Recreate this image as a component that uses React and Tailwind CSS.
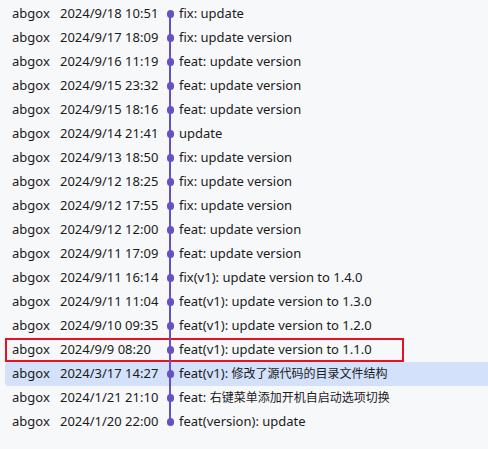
const COMMITS = [
  ['2024/9/18 10:51', 'fix: update'],
  ['2024/9/17 18:09', 'fix: update version'],
  ['2024/9/16 11:19', 'feat: update version'],
  ['2024/9/15 23:32', 'feat: update version'],
  ['2024/9/15 18:16', 'feat: update version'],
  ['2024/9/14 21:41', 'update'],
  ['2024/9/13 18:50', 'fix: update version'],
  ['2024/9/12 18:25', 'fix: update version'],
  ['2024/9/12 17:55', 'fix: update version'],
  ['2024/9/12 12:00', 'feat: update version'],
  ['2024/9/11 17:09', 'feat: update version'],
  ['2024/9/11 16:14', 'fix(v1): update version to 1.4.0'],
  ['2024/9/11 11:04', 'feat(v1): update version to 1.3.0'],
  ['2024/9/10 09:35', 'feat(v1): update version to 1.2.0'],
  ['2024/9/9 08:20', 'feat(v1): update version to 1.1.0'],
  ['2024/3/17 14:27', 'feat(v1): 修改了源代码的目录文件结构'],
  ['2024/1/21 21:10', 'feat: 右键菜单添加开机自启动选项切换'],
  ['2024/1/20 22:00', 'feat(version): update'],
]

const MARKED = 14
const SELECTED = 15

// CJK runs render a touch smaller than the latin text
const Message = ({ text }) =>
  text.split(/([\u4e00-\u9fff]+)/).map((part, i) =>
    /[\u4e00-\u9fff]/.test(part) ? (
      <span key={i} className="text-[12px]">{part}</span>
    ) : (
      <span key={i}>{part}</span>
    )
  )

export default function App() {
  return (
    <div
      className="w-[488px] h-[449px] bg-[#f7f8fa] pt-[2px] text-[13px] text-[#1b1b1b] overflow-hidden"
      style={{ fontFamily: '"Noto Sans", "Noto Sans CJK SC", sans-serif' }}
    >
      {COMMITS.map(([date, msg], i) => {
        const first = i === 0
        const last = i === COMMITS.length - 1
        return (
          <div
            key={i}
            className={`ml-[5px] h-6 flex items-center relative ${
              i === SELECTED ? 'bg-[#d3e1fb] rounded-l-[4px]' : ''
            }`}
          >
            {i === MARKED && (
              <div className="absolute left-0 top-0 w-[399px] h-[24px] border-2 border-[#e81123]" />
            )}
            <span className="w-[55px] pl-[7px] shrink-0">abgox</span>
            <span className="w-[101px] shrink-0 whitespace-nowrap">{date}</span>
            <div className="w-[18px] h-6 shrink-0 relative flex items-center justify-center">
              <div
                className={`absolute left-[8px] w-[2px] bg-[#6750c6] ${
                  first ? 'top-1/2' : 'top-0'
                } ${last ? 'bottom-1/2' : 'bottom-0'}`}
              />
              <div className="relative w-[7px] h-[8px] rounded-full bg-[#6750c6]" />
            </div>
            <span className="whitespace-nowrap">
              <Message text={msg} />
            </span>
          </div>
        )
      })}
    </div>
  )
}
